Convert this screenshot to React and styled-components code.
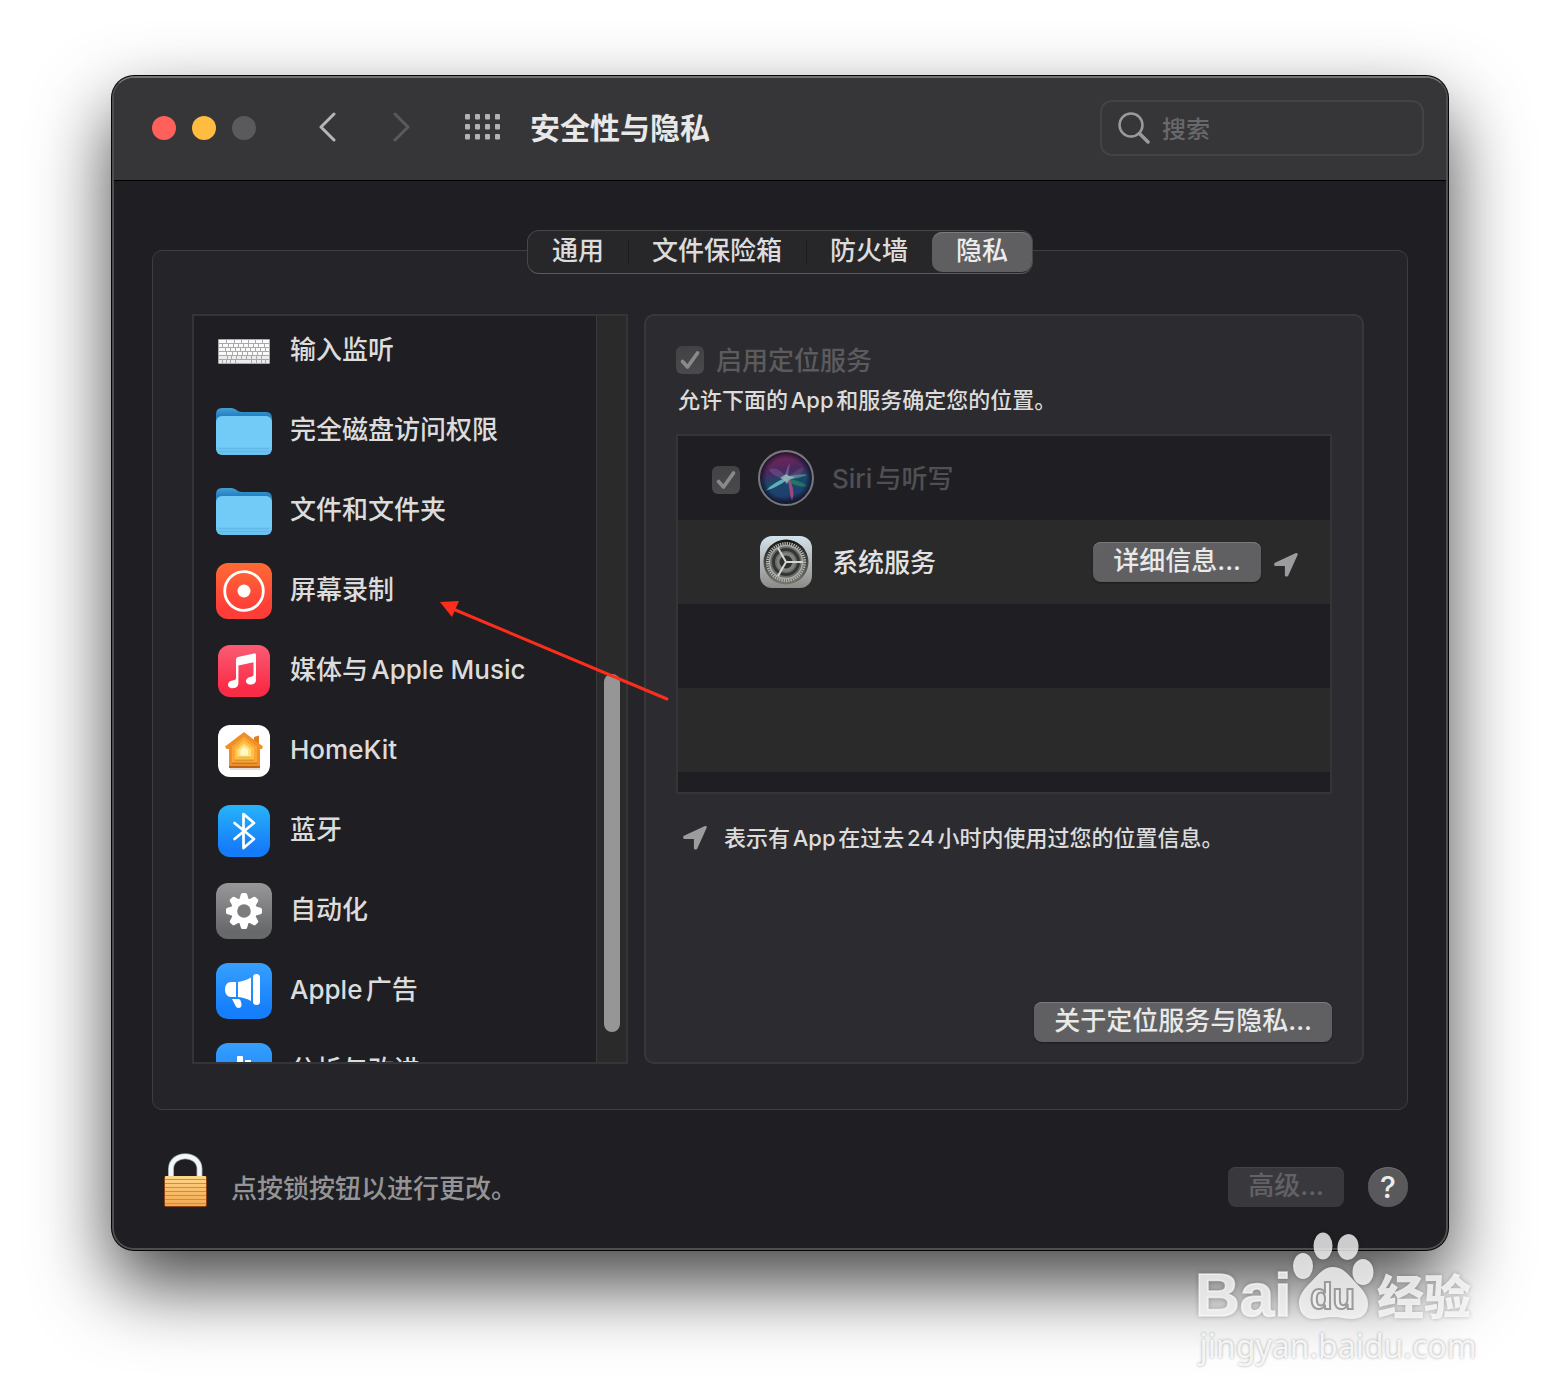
import React from "react";
import styled, { createGlobalStyle, css } from "styled-components";

const GlobalStyle = createGlobalStyle`
  * {
    box-sizing: border-box;
  }
  body {
    margin: 0;
    background: #ffffff;
    font-family: Inter, "Noto Sans CJK SC", sans-serif;
    font-size: 26px;
    line-height: 32px;
    font-weight: 500;
    color: #dcdcdc;
    text-autospace: normal;
  }
  button,
  input {
    font: inherit;
    color: inherit;
    margin: 0;
    padding: 0;
    border: 0;
    background: none;
  }
  ul {
    list-style: none;
    margin: 0;
    padding: 0;
  }
`;

const Page = styled.div`
  position: relative;
  overflow: hidden;
  padding: 76px 112px 148px;
`;

const Window = styled.main`
  border: 2px solid #4e4e50;
  border-top-color: #747476;
  border-radius: 22px;
  background: #1f1f23;
  box-shadow: 0 0 0 1px #050505, 0 34px 76px rgba(0, 0, 0, 0.74);
`;

/* ---------- toolbar ---------- */

const Toolbar = styled.header`
  display: flex;
  align-items: center;
  height: 103px;
  padding: 0 22px 2px 38px;
  background: #363638;
  border-bottom: 1px solid #000000;
  border-radius: 20px 20px 0 0;
`;

const Lights = styled.div`
  display: flex;
  gap: 16px;
`;

const Light = styled.button`
  width: 24px;
  height: 24px;
  border-radius: 50%;
  background: ${(props) => props.$color};
`;

const ToolButton = styled.button`
  display: flex;
  justify-content: center;
  align-items: center;
  width: 36px;
  height: 36px;
  padding-bottom: 2px;
  color: ${(props) => (props.disabled ? "#5a5a5c" : "#b6b6b7")};
`;

const NavButtons = styled.nav`
  display: flex;
  gap: 38px;
  margin: 0 44px 0 54px;
`;

const Title = styled.h1`
  flex: 1;
  margin: 0 0 0 30px;
  font-size: 30px;
  line-height: 40px;
  font-weight: 700;
  color: #e8e8e8;
`;

const Search = styled.label`
  display: flex;
  align-items: center;
  gap: 12px;
  width: 324px;
  height: 56px;
  padding: 0 16px;
  border: 2px solid #434345;
  border-radius: 12px;
`;

const SearchInput = styled.input`
  flex: 1;
  min-width: 0;
  padding-top: 4px;
  font-size: 24px;
  outline: none;

  &::placeholder {
    color: #69696b;
    opacity: 1;
  }
`;

/* ---------- tabs and panel ---------- */

const Content = styled.div`
  padding: 49px 38px 40px;
`;

const Tabs = styled.div`
  position: relative;
  z-index: 1;
  display: flex;
  width: fit-content;
  height: 44px;
  margin: 0 auto -24px;
  padding: 1px 0;
  border: 1px solid #47474a;
  border-bottom-color: #5a5a5d;
  border-radius: 12px;
  background: #27272a;
`;

const Tab = styled.button`
  padding: 0 24px 2px;
  border-radius: 10px;

  ${(props) =>
    props.$active &&
    css`
      background: #5f5f61;
      color: #ececec;
      box-shadow: inset 0 1px 0 #7c7c7e;
    `}
`;

const TabDivider = styled.span`
  width: 1px;
  margin: 8px -1px 8px 0;
  background: #1c1c1f;
`;

const Panel = styled.section`
  display: flex;
  gap: 16px;
  padding: 63px 43px 45px 39px;
  border: 1px solid #3e3e42;
  border-radius: 10px;
  background: #252529;
`;

const Sidebar = styled.div`
  position: relative;
  display: flex;
  width: 436px;
  height: 750px;
  border: 2px solid #353538;
  background: #1f1f23;
`;

const Categories = styled.ul`
  flex: 1;
  overflow: hidden;

  li:first-child {
    margin-top: -6px;
  }
`;

const Category = styled.button`
  display: flex;
  align-items: center;
  gap: 18px;
  width: 100%;
  height: 80px;
  padding: 0 22px;
  text-align: left;
`;

const CategoryIcon = styled.span`
  display: flex;
  justify-content: center;
  width: 56px;
  padding-top: 2px;
`;

const ScrollTrack = styled.div`
  width: 30px;
  padding: 358px 6px 30px 7px;
  border-left: 1px solid #3a3a3b;
  background: #2a2a2a;
`;

const ScrollThumb = styled.div`
  width: 16px;
  height: 100%;
  border-radius: 8px;
  background: #969696;
`;

const Pointer = styled.svg`
  position: absolute;
  z-index: 2;
  left: 239px;
  top: 280px;
  pointer-events: none;
`;

/* ---------- location services ---------- */

const Details = styled.div`
  flex: 1;
  display: flex;
  flex-direction: column;
  padding: 30px 30px 20px;
  border: 2px solid #38383b;
  border-radius: 10px;
  background: #2c2c30;
`;

const CheckLabel = styled.label`
  display: flex;
  align-items: center;
  gap: 12px;
  height: 28px;
  color: #5b5b5e;
`;

const CheckText = styled.span`
  padding-top: 2px;
`;

const CheckBox = styled.span`
  display: grid;
  width: 28px;
  height: 28px;

  > * {
    grid-area: 1 / 1;
  }
`;

const CheckInput = styled.input`
  appearance: none;
  width: 28px;
  height: 28px;
  border-radius: 6px;
  background: linear-gradient(#424245, #4a4a4d);
`;

const Hint = styled.p`
  margin: 12px 0 20px 2px;
  font-size: 22px;
  line-height: 28px;
`;

const AppList = styled.ul`
  height: 360px;
  overflow: hidden;
  border: 2px solid #353535;
`;

const AppRow = styled.li`
  display: flex;
  align-items: center;
  height: 84px;
  padding: 0 31px 0 34px;
  background: #1f1f23;

  &:nth-child(even) {
    background: #2a2a2b;
  }
`;

const AppCheck = styled.span`
  width: 28px;
  height: 28px;
  margin: 4px 18px 0 0;
`;

const AppName = styled.span`
  flex: 1;
  margin-left: 18px;
  padding-top: 2px;
  color: ${(props) => (props.$dimmed ? "#505053" : "#e2e2e2")};
`;

const AppIcon = styled.span`
  display: flex;
  justify-content: center;
  width: 56px;
`;

const PushButton = styled.button`
  height: 40px;
  padding: 0 20px 2px;
  border-radius: 8px;
  background: #606062;
  color: #e9e9e9;
  box-shadow: inset 0 1px 0 #7b7b7d, 0 1px 2px rgba(0, 0, 0, 0.4);

  &:disabled {
    background: #39393d;
    color: #626265;
    box-shadow: inset 0 1px 0 #444447;
  }
`;

const RowArrow = styled.span`
  display: flex;
  margin: 6px 0 0 12px;
`;

const Note = styled.p`
  display: flex;
  align-items: center;
  gap: 16px;
  margin: 30px 0 0 6px;
  font-size: 22px;
  line-height: 28px;
`;

const DetailsFooter = styled.div`
  display: flex;
  justify-content: flex-end;
  margin-top: auto;
`;

/* ---------- footer ---------- */

const Footer = styled.footer`
  display: flex;
  align-items: center;
  gap: 24px;
  margin-top: 43px;
`;

const LockButton = styled.button`
  display: flex;
  margin-left: 12px;
`;

const LockText = styled.span`
  flex: 1;
  padding-top: 16px;
  color: #949496;
`;

const FooterButtons = styled.div`
  display: flex;
  align-items: center;
  gap: 24px;
  padding-top: 12px;
`;

const HelpButton = styled.button`
  width: 40px;
  height: 40px;
  border-radius: 50%;
  background: #59595b;
  font-size: 30px;
  color: #ececec;
  box-shadow: inset 0 1px 0 #6c6c6e;
`;

/* ---------- watermark ---------- */

const Watermark = styled.div`
  position: absolute;
  right: 74px;
  bottom: 36px;
  width: 296px;
`;

const WatermarkLogo = styled.svg`
  display: block;
  filter: drop-shadow(0 0 2px rgba(0, 0, 0, 0.3));
`;

const WatermarkUrl = styled.div`
  margin-top: -4px;
  font-family: "Noto Sans", sans-serif;
  font-size: 32px;
  line-height: 32px;
  font-weight: 400;
  text-align: center;
  color: rgba(255, 255, 255, 0.85);
  text-shadow: 0 0 3px rgba(0, 0, 0, 0.35);
`;

/* ---------- icons ---------- */

function KeyboardIcon() {
  const rows = [
    [0, 8, 16, 23, 30, 37, 44],
    [4, 10, 15, 20, 25, 30, 35, 40, 46],
    [7, 12, 17, 22, 27, 32, 37, 42, 47],
    [8, 14, 19, 24, 29, 34, 39, 44],
    [9, 13, 18, 23, 28, 33, 38, 43],
    [4, 8, 12, 17, 33, 38, 43, 47],
  ];
  return (
    <svg width="52" height="25" viewBox="0 0 52 25">
      <rect width="52" height="25" rx="1" fill="#a9a9ab" />
      {rows.map((keys, r) =>
        keys.map((x, i) => {
          const start = x === 0 ? 1 : x + 1;
          const end = i === keys.length - 1 ? 51 : keys[i + 1];
          return (
            <g key={`${r}-${i}`} fill={r < 4 ? "#fafafa" : "#ececec"}>
              {i === 0 && x > 0 && (
                <rect x="1" y={1 + r * 4} width={x - 1} height="3" />
              )}
              <rect x={start} y={1 + r * 4} width={end - start} height="3" />
            </g>
          );
        })
      )}
    </svg>
  );
}

function FolderIcon() {
  return (
    <svg width="56" height="47" viewBox="0 0 56 47">
      <defs>
        <linearGradient id="folderBack" x1="0" y1="0" x2="0" y2="1">
          <stop offset="0" stopColor="#459fd5" />
          <stop offset="0.3" stopColor="#2583c2" />
        </linearGradient>
        <linearGradient id="folderFront" x1="0" y1="0" x2="0" y2="1">
          <stop offset="0" stopColor="#72caf6" />
          <stop offset="0.78" stopColor="#73cbf7" />
          <stop offset="0.82" stopColor="#6cc4f1" />
          <stop offset="1" stopColor="#69c1ee" />
        </linearGradient>
      </defs>
      <path
        d="M0 6Q0 0 6 0H15C20 0 21 4 26 4H50Q56 4 56 10V24H0Z"
        fill="url(#folderBack)"
      />
      <rect y="8" width="56" height="39" rx="6" fill="url(#folderFront)" />
      <path d="M3 40.500H53M3 43.500H53" stroke="#62b8e6" strokeWidth="1" />
    </svg>
  );
}

function Tile({ size = 52, id, from, to, children }) {
  return (
    <svg width={size} height={size} viewBox={`0 0 ${size} ${size}`}>
      <defs>
        <linearGradient id={id} x1="0" y1="0" x2="0" y2="1">
          <stop offset="0" stopColor={from} />
          <stop offset="0.85" stopColor={to} />
        </linearGradient>
      </defs>
      <rect width={size} height={size} rx="12" fill={`url(#${id})`} />
      {children}
    </svg>
  );
}

function RecordIcon() {
  return (
    <Tile size={56} id="record" from="#ff6a35" to="#fe3c38">
      <circle cx="28" cy="28" r="19.300" fill="none" stroke="#fff" strokeWidth="2.800" />
      <circle cx="28" cy="28" r="6.500" fill="#fff" />
    </Tile>
  );
}

function MusicIcon() {
  return (
    <Tile id="music" from="#fb5c74" to="#fa2b46">
      <path
        d="M18 14.500Q18 12.300 20 11.900L36 8.400Q38 8 38 10V35C38 38 35.500 39.600 32.500 39.600C29.500 39.600 27.600 37.700 28 35.600C28.600 32.600 32 31.800 34 31.400C35.200 31.100 35.500 30.500 35.500 29.500V17.300L20.400 20.500V38C20.400 41.600 17.800 43.200 14.500 43.200C11.500 43.200 9.700 41.300 10.100 39.200C10.700 36.200 14 35.600 16.300 35.100C17.600 34.800 18 34.200 18 33Z"
        fill="#fff"
      />
    </Tile>
  );
}

function HomeIcon() {
  return (
    <Tile id="home" from="#ffffff" to="#ffffff">
      <path d="M12 42H42V45H12Z" fill="#d9c6ba" opacity="0.6" />
      <path d="M36 12L41 10.500V22H36Z" fill="#df7d22" />
      <path
        d="M26 7L45 21.500L44 24H42V43H11V24H8.500L7 21.500Z"
        fill="#f08f28"
      />
      <path d="M11 41H42V43H11Z" fill="#b96416" />
      <path d="M26 11.500L39 21.500V38.500H14V21.500Z" fill="#fba536" />
      <path d="M14 37.500H39V39H14Z" fill="#cf7a1c" />
      <path d="M26 15L36 23V35.500H17V23Z" fill="#ffc247" />
      <path d="M17 34.500H36V36H17Z" fill="#db9425" />
      <path d="M26 18.500L33 24.500V32.500H19.500V24.500Z" fill="#ffe27a" />
      <path d="M19.500 31.700H33V32.700H19.500Z" fill="#e3ab3c" />
      <path d="M26 21.500L30 25V30.500H22.500V25Z" fill="#fff9c9" />
    </Tile>
  );
}

function BluetoothIcon() {
  return (
    <Tile id="bluetooth" from="#27b3fa" to="#157cf9">
      <path
        d="M16.500 18L36 34L25.500 43V9L36 18L16.500 34"
        fill="none"
        stroke="#fff"
        strokeWidth="2.700"
        strokeLinecap="round"
        strokeLinejoin="round"
      />
    </Tile>
  );
}

function GearIcon() {
  return (
    <Tile size={56} id="gear" from="#98989a" to="#68696b">
      {[0, 45, 90, 135].map((angle) => (
        <path
          key={angle}
          d="M23.200 17L24.800 11.500Q25.200 10 26.500 10H29.500Q30.800 10 31.200 11.500L32.800 17V39L31.200 44.500Q30.800 46 29.500 46H26.500Q25.200 46 24.800 44.500L23.200 39Z"
          fill="#fff"
          transform={`rotate(${angle} 28 28)`}
        />
      ))}
      <circle cx="28" cy="28" r="13" fill="#fff" />
      <circle cx="28" cy="28" r="6.800" fill="#7c7c7e" />
    </Tile>
  );
}

function AdsIcon() {
  return (
    <Tile size={56} id="ads" from="#37a0fe" to="#157efb">
      <g fill="#fff">
        <path d="M20 19V34H15C11.500 34 9 31 9 26.500C9 22 11.500 19 15 19Z" />
        <path d="M22 19C27 18.500 31.500 16.500 35 14.500V38C31.500 36 27 34.500 22 34Z" />
        <rect x="37" y="11" width="7" height="31" rx="3.500" />
        <path d="M16 36H22.500C24 36 24.300 37 24.700 38L25.500 41C26 43.500 24.500 45 22.500 45C21 45 20.200 44.300 19.600 43Z" />
      </g>
    </Tile>
  );
}

function AnalyticsIcon() {
  return (
    <Tile size={56} id="analytics" from="#37a0fe" to="#157efb">
      <g fill="#fff">
        <rect x="12" y="24" width="6" height="20" rx="1" />
        <rect x="21" y="13" width="6" height="31" rx="1" />
        <rect x="29" y="17" width="6" height="27" rx="1" />
        <rect x="38" y="28" width="6" height="16" rx="1" />
      </g>
    </Tile>
  );
}

function SiriIcon() {
  return (
    <svg width="56" height="56" viewBox="0 0 56 56">
      <defs>
        <linearGradient id="siri" x1="0.400" y1="0" x2="0.600" y2="1">
          <stop offset="0" stopColor="#7a2555" />
          <stop offset="0.35" stopColor="#4b2860" />
          <stop offset="0.55" stopColor="#1b4868" />
          <stop offset="0.8" stopColor="#1d3f70" />
          <stop offset="1" stopColor="#171c3c" />
        </linearGradient>
        <radialGradient id="siriShade">
          <stop offset="0.75" stopColor="#141428" stopOpacity="0" />
          <stop offset="1" stopColor="#141428" stopOpacity="0.9" />
        </radialGradient>
      </defs>
      <circle cx="28" cy="28" r="27" fill="url(#siri)" />
      <path d="M28 28C24 21 17 16 11 20C14 25 21 28 28 29Z" fill="#7c5f9e" opacity="0.45" />
      <path d="M26 28C28 22 29 17 32 13C31 19 30 24 30 28Z" fill="#9a6ca2" opacity="0.6" />
      <path d="M31 26C37 22 43 17 45 18C46 24 38 27 30 29Z" fill="#7b3f80" opacity="0.5" />
      <path d="M27 26C36 26 43 23 50 25C43 27 36 29 29 30Z" fill="#5aa0a0" opacity="0.7" />
      <path d="M28 28C35 29 45 32 49 36C42 38 33 34 28 30Z" fill="#227a63" opacity="0.9" />
      <path d="M27 28C20 31 12 36 7 41C15 39 23 34 29 30Z" fill="#5fb0b8" />
      <path d="M29 29C32 35 31 44 34 51C37 45 35 35 31 28Z" fill="#a84b7b" opacity="0.9" />
      <path d="M22 28L28 24L31 26L37 27L31 30L29 34L26 30Z" fill="#9cbcc0" opacity="0.8" />
      <circle cx="28" cy="28" r="26" fill="url(#siriShade)" />
      <circle cx="28" cy="28" r="27" fill="none" stroke="#78787b" strokeWidth="2" />
    </svg>
  );
}

function SystemIcon() {
  return (
    <svg width="52" height="52" viewBox="0 0 52 52">
      <defs>
        <linearGradient id="systemTile" x1="0" y1="0" x2="0" y2="1">
          <stop offset="0" stopColor="#d3e2ea" />
          <stop offset="1" stopColor="#8d8b88" />
        </linearGradient>
        <linearGradient id="systemDial" x1="0" y1="0" x2="0" y2="1">
          <stop offset="0" stopColor="#151715" />
          <stop offset="1" stopColor="#77776f" />
        </linearGradient>
      </defs>
      <rect width="52" height="52" rx="12" fill="url(#systemTile)" />
      <circle cx="26" cy="26" r="22.500" fill="url(#systemDial)" />
      <circle cx="26" cy="26" r="18.500" fill="none" stroke="#b3b5b2" strokeWidth="3" strokeDasharray="1.300 1" />
      <circle cx="26" cy="26" r="16.500" fill="#6a6c69" stroke="#a9aba8" strokeWidth="1.400" />
      <circle cx="26" cy="26" r="12.500" fill="none" stroke="#343634" strokeWidth="3" />
      <circle cx="26" cy="26" r="8" fill="#2e302e" stroke="#80827f" strokeWidth="3" />
      <path d="M26 26H42.500M26 26L18 12M26 26L18 40" stroke="#d4d6d3" strokeWidth="2" />
    </svg>
  );
}

function LocationIcon() {
  return (
    <svg width="26" height="26" viewBox="0 0 26 26">
      <path
        d="M23.500 2.300L14 23.300H13.200V12.800H2.500V12Z"
        fill="#9c9c9e"
        stroke="#9c9c9e"
        strokeWidth="2.600"
        strokeLinejoin="round"
      />
    </svg>
  );
}

function LockIcon() {
  const lines = [26, 30, 34, 38, 42, 46, 50];
  return (
    <svg width="43" height="55" viewBox="0 0 43 55">
      <defs>
        <linearGradient id="lockBody" x1="0" y1="0" x2="0" y2="1">
          <stop offset="0" stopColor="#ffd78b" />
          <stop offset="0.5" stopColor="#f8bd6a" />
          <stop offset="1" stopColor="#f3aa52" />
        </linearGradient>
      </defs>
      <path d="M7 26V16C7 -1 35.500 -1 35.500 16V26" fill="none" stroke="#8b9aa5" strokeWidth="6" />
      <path d="M7 26V16C7 -1 35.500 -1 35.500 16V26" fill="none" stroke="#f2f6f8" strokeWidth="4.500" />
      <rect y="23" width="43" height="31" rx="2" fill="#8c4412" />
      <rect x="1" y="23" width="41" height="30" rx="1" fill="url(#lockBody)" />
      {lines.map((y) => (
        <path key={y} d={`M1 ${y}.500H42`} stroke="#d98a38" strokeWidth="1.200" />
      ))}
    </svg>
  );
}

function CheckMark() {
  return (
    <svg width="28" height="28" viewBox="0 0 28 28">
      <path
        d="M6.500 15.500L11.500 21L21.500 7"
        fill="none"
        stroke="#89898b"
        strokeWidth="3.700"
        strokeLinecap="round"
        strokeLinejoin="round"
      />
    </svg>
  );
}

function Check({ label }) {
  return (
    <CheckBox>
      <CheckInput type="checkbox" defaultChecked disabled aria-label={label} />
      <CheckMark />
    </CheckBox>
  );
}

function Chevron({ d }) {
  return (
    <svg width="20" height="30" viewBox="0 0 20 30">
      <path d={d} fill="none" stroke="currentColor" strokeWidth="3" strokeLinecap="round" strokeLinejoin="round" />
    </svg>
  );
}

function GridIcon() {
  return (
    <svg width="36" height="26" viewBox="0 0 36 26" fill="#b2b2b3">
      {[0, 10, 20].map((y) =>
        [1, 11, 21, 31].map((x) => (
          <rect key={`${x}-${y}`} x={x} y={y} width="5" height="5.500" rx="1" />
        ))
      )}
    </svg>
  );
}

function BaiduLogo() {
  return (
    <WatermarkLogo width="296" height="104" viewBox="-6 0 296 104" fill="#fff" fillOpacity="0.78">
      <text
        x="-1"
        y="86"
        fontFamily="Liberation Sans"
        fontWeight="700"
        fontSize="62"
        stroke="#fff"
        strokeOpacity="0.6"
        strokeWidth="1.500"
      >
        Bai
      </text>
      <ellipse cx="107" cy="36" rx="10" ry="13" />
      <ellipse cx="127" cy="16" rx="9.500" ry="13.500" />
      <ellipse cx="152" cy="17" rx="10.500" ry="13" transform="rotate(8 152 17)" />
      <ellipse cx="167" cy="42" rx="10.500" ry="13" />
      <path d="M137 37C147 37 153 45 160 53C167 60 172 66 172 74C172 84 165 89 156 89C149 89 144 87 137 87C130 87 125 89 118 89C109 89 103 83 103 73C103 65 108 59 115 52C122 45 127 37 137 37Z" />
      <text
        x="114"
        y="79"
        fontFamily="Liberation Sans"
        fontWeight="700"
        fontSize="37"
        fill="#f0f0f0"
        stroke="#9a9a9a"
        strokeWidth="2"
      >
        du
      </text>
      <text x="181" y="84" fontFamily="Noto Sans CJK SC" fontWeight="900" fontSize="47">
        经验
      </text>
    </WatermarkLogo>
  );
}

const tabs = ["通用", "文件保险箱", "防火墙", "隐私"];

const categories = [
  { name: "输入监听", Icon: KeyboardIcon },
  { name: "完全磁盘访问权限", Icon: FolderIcon },
  { name: "文件和文件夹", Icon: FolderIcon },
  { name: "屏幕录制", Icon: RecordIcon },
  { name: "媒体与Apple Music", Icon: MusicIcon },
  { name: "HomeKit", Icon: HomeIcon },
  { name: "蓝牙", Icon: BluetoothIcon },
  { name: "自动化", Icon: GearIcon },
  { name: "Apple广告", Icon: AdsIcon },
  { name: "分析与改进", Icon: AnalyticsIcon },
];

function App() {
  return (
    <Page>
      <GlobalStyle />
      <Window>
        <Toolbar>
          <Lights>
            <Light $color="#ff605c" aria-label="关闭" />
            <Light $color="#ffbc40" aria-label="最小化" />
            <Light $color="#5a5a5c" aria-label="缩放" />
          </Lights>
          <NavButtons>
            <ToolButton aria-label="后退">
              <Chevron d="M16 2L3 15L16 28" />
            </ToolButton>
            <ToolButton aria-label="前进" disabled>
              <Chevron d="M3 2L16 15L3 28" />
            </ToolButton>
          </NavButtons>
          <ToolButton aria-label="显示全部">
            <GridIcon />
          </ToolButton>
          <Title>安全性与隐私</Title>
          <Search>
            <svg width="32" height="32" viewBox="0 0 32 32" fill="none" stroke="#9a9a9c" strokeLinecap="round">
              <circle cx="13" cy="13" r="11.500" strokeWidth="2.500" />
              <path d="M21.500 21.500L30 30" strokeWidth="3.500" />
            </svg>
            <SearchInput type="text" placeholder="搜索" aria-label="搜索" />
          </Search>
        </Toolbar>

        <Content>
          <Tabs role="tablist">
            {tabs.map((tab, i) => (
              <React.Fragment key={tab}>
                <Tab role="tab" $active={i === 3} aria-selected={i === 3}>
                  {tab}
                </Tab>
                {i < 2 && <TabDivider />}
              </React.Fragment>
            ))}
          </Tabs>

          <Panel>
            <Sidebar>
              <Categories>
                {categories.map(({ name, Icon }) => (
                  <li key={name}>
                    <Category>
                      <CategoryIcon>
                        <Icon />
                      </CategoryIcon>
                      <span>{name}</span>
                    </Category>
                  </li>
                ))}
              </Categories>
              <ScrollTrack>
                <ScrollThumb />
              </ScrollTrack>
              <Pointer width="240" height="110" viewBox="0 0 240 110">
                <path d="M234 103L20 13" stroke="#fc2d1c" strokeWidth="3" strokeLinecap="round" />
                <path d="M7 6L26 5L19 21Z" fill="#fc2d1c" />
              </Pointer>
            </Sidebar>

            <Details>
              <CheckLabel>
                <Check />
                <CheckText>启用定位服务</CheckText>
              </CheckLabel>
              <Hint>允许下面的App和服务确定您的位置。</Hint>
              <AppList>
                <AppRow>
                  <AppCheck>
                    <Check label="Siri与听写" />
                  </AppCheck>
                  <AppIcon>
                    <SiriIcon />
                  </AppIcon>
                  <AppName $dimmed>Siri与听写</AppName>
                </AppRow>
                <AppRow>
                  <AppCheck />
                  <AppIcon>
                    <SystemIcon />
                  </AppIcon>
                  <AppName>系统服务</AppName>
                  <PushButton>详细信息...</PushButton>
                  <RowArrow>
                    <LocationIcon />
                  </RowArrow>
                </AppRow>
                <AppRow />
                <AppRow />
                <AppRow />
              </AppList>
              <Note>
                <LocationIcon />
                <span>表示有App在过去24小时内使用过您的位置信息。</span>
              </Note>
              <DetailsFooter>
                <PushButton>关于定位服务与隐私...</PushButton>
              </DetailsFooter>
            </Details>
          </Panel>

          <Footer>
            <LockButton aria-label="锁">
              <LockIcon />
            </LockButton>
            <LockText>点按锁按钮以进行更改。</LockText>
            <FooterButtons>
              <PushButton disabled>高级...</PushButton>
              <HelpButton aria-label="帮助">?</HelpButton>
            </FooterButtons>
          </Footer>
        </Content>
      </Window>

      <Watermark>
        <BaiduLogo />
        <WatermarkUrl>jingyan.baidu.com</WatermarkUrl>
      </Watermark>
    </Page>
  );
}

export default App;
